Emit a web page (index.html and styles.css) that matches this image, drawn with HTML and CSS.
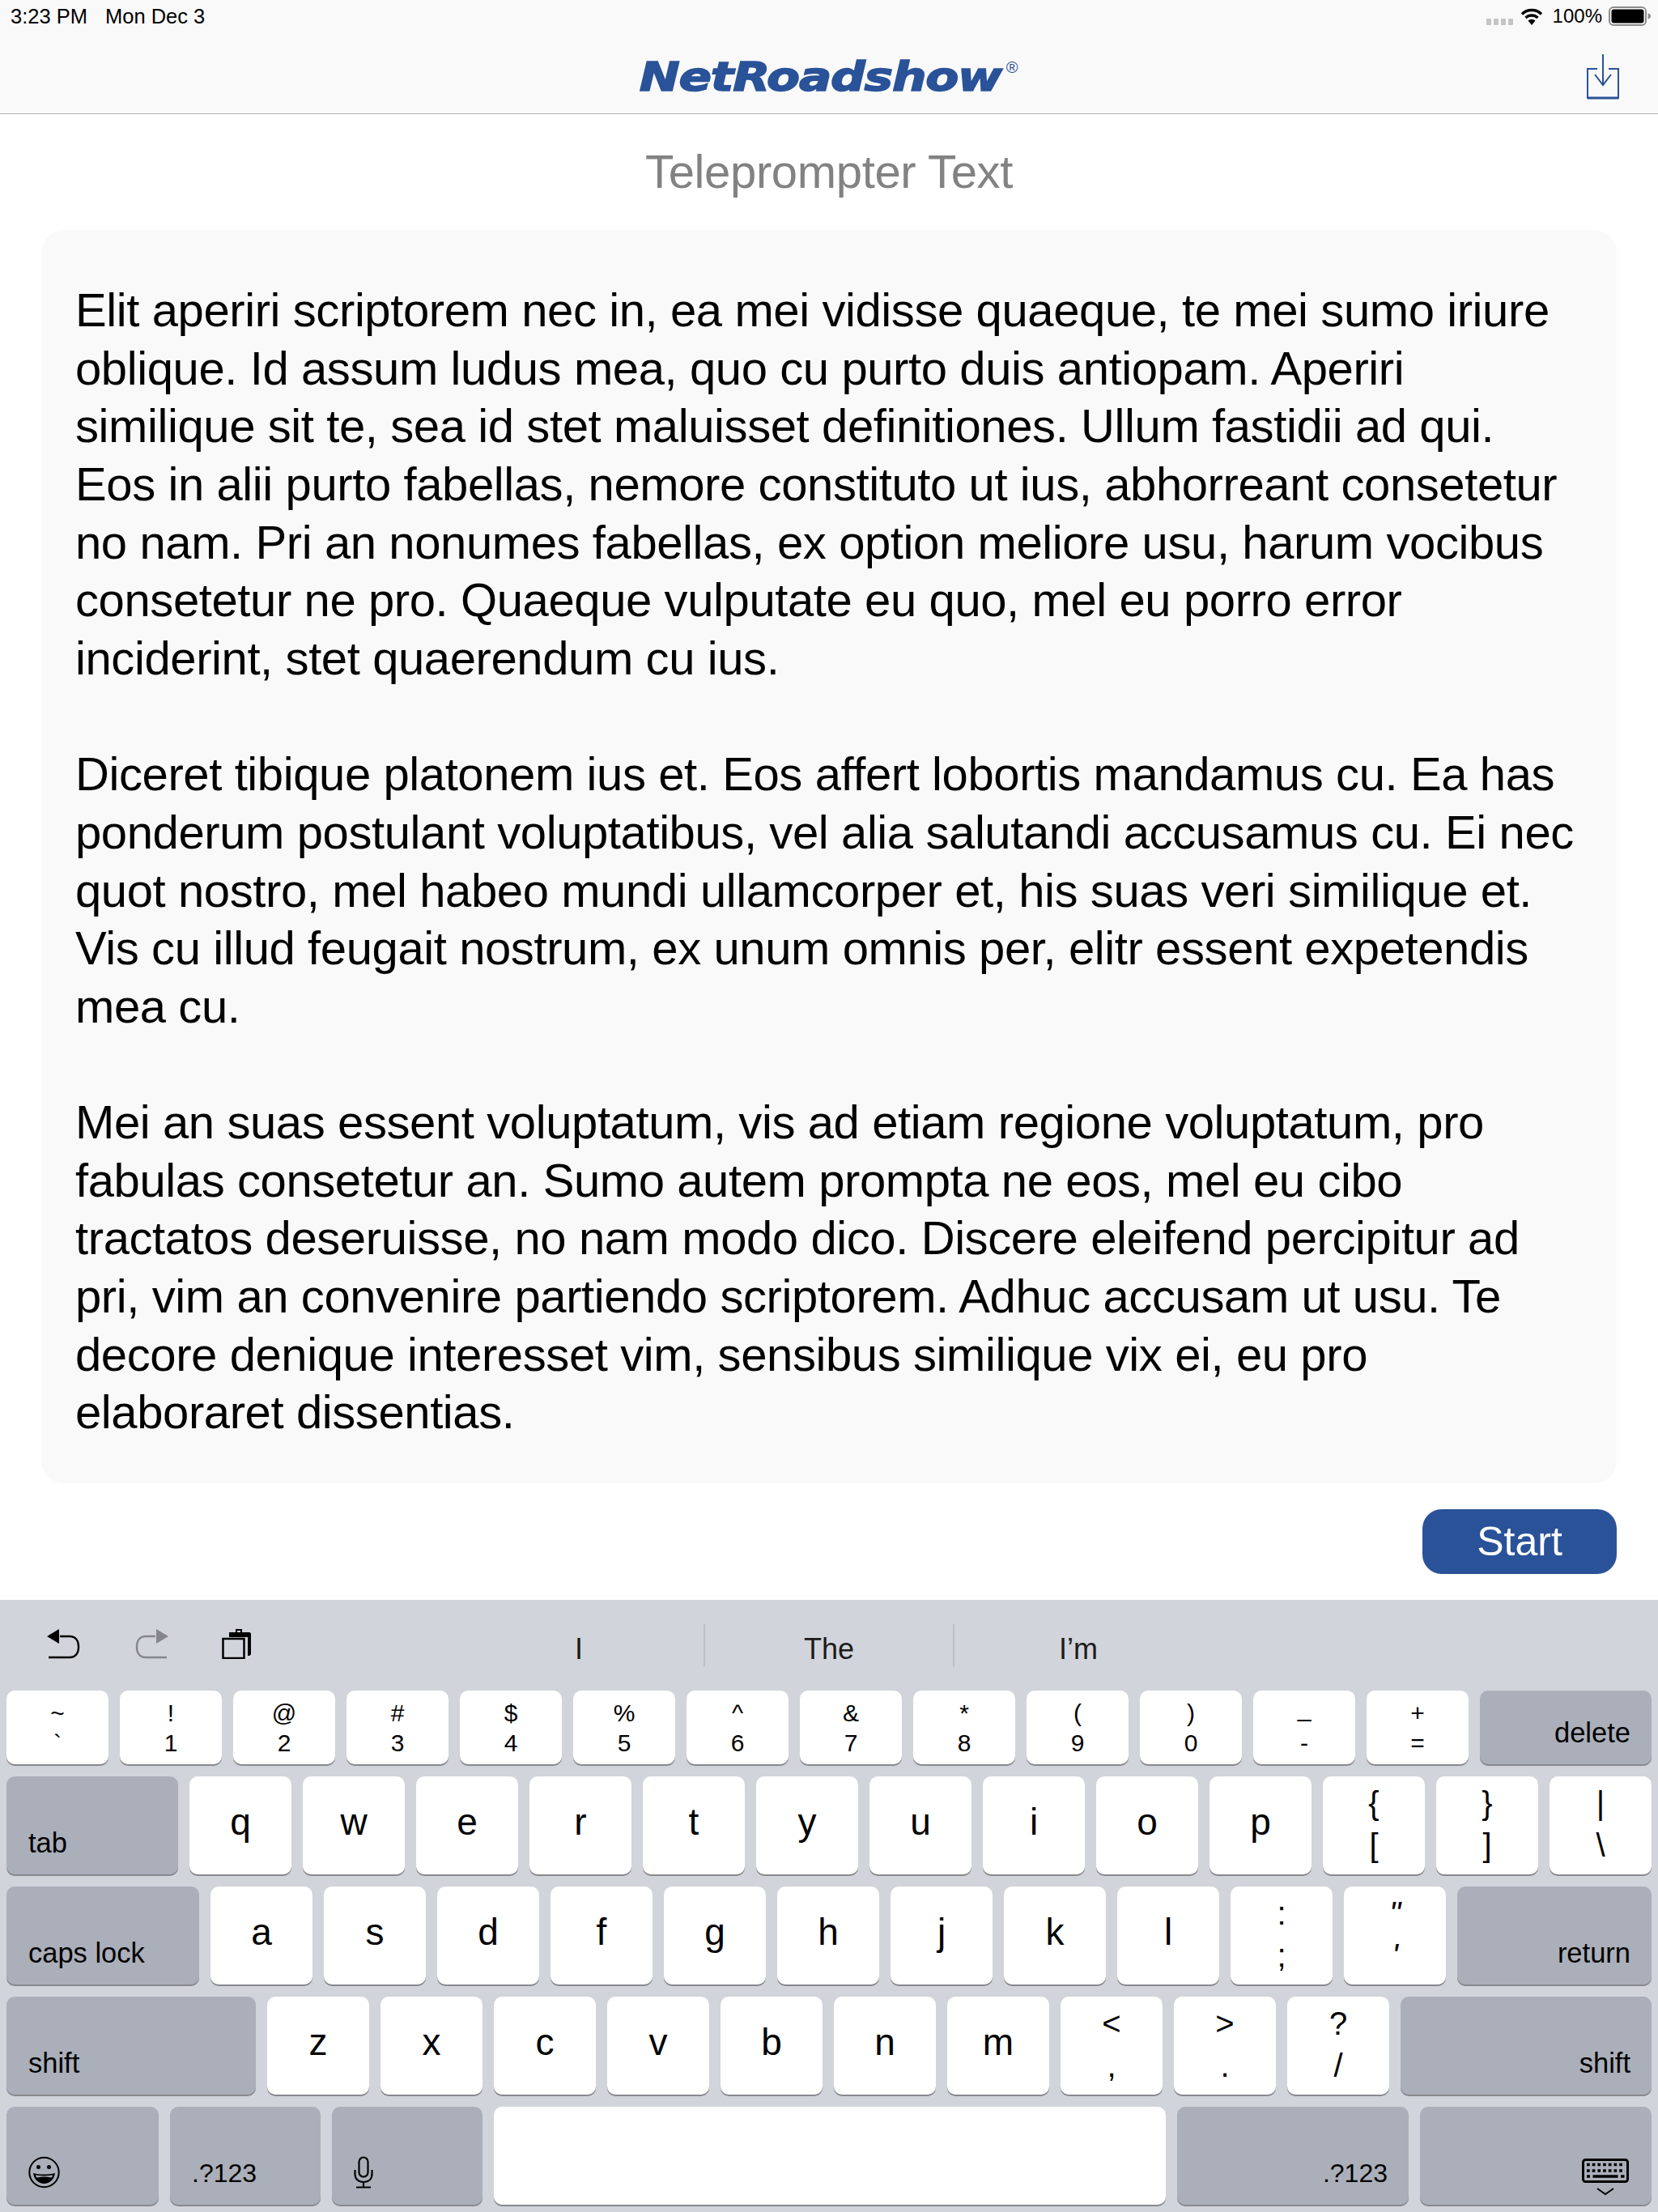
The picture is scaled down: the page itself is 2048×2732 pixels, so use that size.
FILE: index.html
```html
<!DOCTYPE html>
<html>
    <head>
        <title>Teleprompter Text</title>
        <link rel="stylesheet" href="styles.css">
    </head>
    <body>
        <header class="top">
            <div class="status">
                <div class="status-left"><span>3:23 PM</span><span>Mon Dec 3</span></div>
                <div class="status-right">
                    <svg class="signal" width="34" height="8" viewBox="0 0 34 8"><rect x="0" y="0" width="6" height="8" rx="1"/><rect x="9" y="0" width="6" height="8" rx="1"/><rect x="18" y="0" width="6" height="8" rx="1"/><rect x="27" y="0" width="6" height="8" rx="1"/></svg>
                    <svg class="wifi" width="28" height="21" viewBox="0 0 28 21"><path d="M2 7.500a17 17 0 0 1 24 0" fill="none" stroke="#000" stroke-width="3.400"/><path d="M6.500 12a11 11 0 0 1 15 0" fill="none" stroke="#000" stroke-width="3.400"/><path d="M9.500 15.500a6.500 6.500 0 0 1 9 0L14 21z"/></svg>
                    <span class="percent">100%</span>
                    <svg class="battery" width="53" height="24" viewBox="0 0 53 24"><rect x="1" y="1" width="45" height="22" rx="5" fill="none" stroke="#8c8c8c" stroke-width="2"/><rect x="3.500" y="3.500" width="40" height="17" rx="3"/><path d="M48.500 8.500c2.500 .5 3.500 1.800 3.500 3.500s-1 3-3.500 3.500z" fill="#8c8c8c"/></svg>
                </div>
            </div>
            <nav class="nav">
                <div class="logo">NetRoadshow<sup class="reg">®</sup></div>
                <svg class="download" width="40" height="56" viewBox="0 0 40 56" fill="none" stroke="#2a5298" stroke-width="2">
                    <path d="M13 18H1v36h38V18H27"/>
                    <path d="M1 54h38" stroke-width="3"/>
                    <path d="M20 0v38"/>
                    <path d="M10 25l10 13 10-13"/>
                </svg>
            </nav>
        </header>

        <main class="main">
            <h1 class="title">Teleprompter Text</h1>
            <div class="card">
                <p>Elit aperiri scriptorem nec in, ea mei vidisse quaeque, te mei sumo iriure<br>oblique. Id assum ludus mea, quo cu purto duis antiopam. Aperiri<br>similique sit te, sea id stet maluisset definitiones. Ullum fastidii ad qui.<br>Eos in alii purto fabellas, nemore constituto ut ius, abhorreant consetetur<br>no nam. Pri an nonumes fabellas, ex option meliore usu, harum vocibus<br>consetetur ne pro. Quaeque vulputate eu quo, mel eu porro error<br>inciderint, stet quaerendum cu ius.</p>
                <p>Diceret tibique platonem ius et. Eos affert lobortis mandamus cu. Ea has<br>ponderum postulant voluptatibus, vel alia salutandi accusamus cu. Ei nec<br>quot nostro, mel habeo mundi ullamcorper et, his suas veri similique et.<br>Vis cu illud feugait nostrum, ex unum omnis per, elitr essent expetendis<br>mea cu.</p>
                <p>Mei an suas essent voluptatum, vis ad etiam regione voluptatum, pro<br>fabulas consetetur an. Sumo autem prompta ne eos, mel eu cibo<br>tractatos deseruisse, no nam modo dico. Discere eleifend percipitur ad<br>pri, vim an convenire partiendo scriptorem. Adhuc accusam ut usu. Te<br>decore denique interesset vim, sensibus similique vix ei, eu pro<br>elaboraret dissentias.</p>
            </div>
            <div class="actions"><button class="start">Start</button></div>
        </main>

        <section class="keyboard">
            <div class="toolbar">
                <div class="tools">
                    <svg class="tool" width="42" height="38" viewBox="0 0 42 38" fill="none" stroke="#000" stroke-width="2.500"><path d="M16 10h12c7 0 11 5 11 13s-4 13-11 13H2"/><path d="M0 10L15 1v18z" fill="#000" stroke="none"/></svg>
                    <svg class="tool" width="42" height="38" viewBox="0 0 42 38" fill="none" stroke="#85878c" stroke-width="2.500"><path d="M26 10H14C7 10 3 15 3 23s4 13 11 13h26"/><path d="M42 10L27 1v18z" fill="#85878c" stroke="none"/></svg>
                    <svg class="tool" width="37" height="38" viewBox="0 0 37 38" fill="none" stroke="#000" stroke-width="2.500"><rect x="1.500" y="13" width="26" height="24"/><path d="M9 11V5h8V1h8v4h9c1 0 2 1 2 2v24c0 2-1 3-3 3h-1V11z" fill="#000" stroke="none"/><rect x="19" y="3" width="4" height="2" fill="#d0d3da" stroke="none"/></svg>
                </div>
                <div class="suggestions">
                    <span class="suggestion">I</span>
                    <span class="suggestion divided">The</span>
                    <span class="suggestion divided">I’m</span>
                </div>
            </div>

            <div class="row row-num">
                <div class="key dual"><span>~</span><span>`</span></div>
                <div class="key dual"><span>!</span><span>1</span></div>
                <div class="key dual"><span>@</span><span>2</span></div>
                <div class="key dual"><span>#</span><span>3</span></div>
                <div class="key dual"><span>$</span><span>4</span></div>
                <div class="key dual"><span>%</span><span>5</span></div>
                <div class="key dual"><span>^</span><span>6</span></div>
                <div class="key dual"><span>&amp;</span><span>7</span></div>
                <div class="key dual"><span>*</span><span>8</span></div>
                <div class="key dual"><span>(</span><span>9</span></div>
                <div class="key dual"><span>)</span><span>0</span></div>
                <div class="key dual"><span class="raised">_</span><span>-</span></div>
                <div class="key dual"><span>+</span><span>=</span></div>
                <div class="key fn right grow">delete</div>
            </div>
            <div class="row">
                <div class="key fn w-tab">tab</div>
                <div class="key">q</div><div class="key">w</div><div class="key">e</div><div class="key">r</div><div class="key">t</div>
                <div class="key">y</div><div class="key">u</div><div class="key">i</div><div class="key">o</div><div class="key">p</div>
                <div class="key dual big"><span>{</span><span>[</span></div>
                <div class="key dual big"><span>}</span><span>]</span></div>
                <div class="key dual big"><span>|</span><span>\</span></div>
            </div>
            <div class="row">
                <div class="key fn w-caps">caps lock</div>
                <div class="key">a</div><div class="key">s</div><div class="key">d</div><div class="key">f</div><div class="key">g</div>
                <div class="key">h</div><div class="key">j</div><div class="key">k</div><div class="key">l</div>
                <div class="key dual big"><span>:</span><span>;</span></div>
                <div class="key dual big"><span class="slant">"</span><span class="slant">'</span></div>
                <div class="key fn right grow">return</div>
            </div>
            <div class="row">
                <div class="key fn w-shift">shift</div>
                <div class="key">z</div><div class="key">x</div><div class="key">c</div><div class="key">v</div><div class="key">b</div>
                <div class="key">n</div><div class="key">m</div>
                <div class="key dual big"><span>&lt;</span><span>,</span></div>
                <div class="key dual big"><span>&gt;</span><span>.</span></div>
                <div class="key dual big"><span>?</span><span>/</span></div>
                <div class="key fn right grow">shift</div>
            </div>
            <div class="row">
                <div class="key fn w-emoji">
                    <svg width="40" height="40" viewBox="0 0 40 40"><circle cx="19.500" cy="20" r="18.200" fill="none" stroke="#000" stroke-width="2"/><circle cx="12.500" cy="13.500" r="2.500"/><circle cx="25.500" cy="13.500" r="2.500"/><path d="M6 21c8 2 18 2 27 0-1 8-7 13-13.500 13S7 29 6 21z"/><path d="M9 23.300c6 1.500 15 1.500 21 0l-1 3.200c-6-1.500-13-1.500-19 0z" fill="#abafb9"/></svg>
                </div>
                <div class="key fn w-mode small">.?123</div>
                <div class="key fn w-mode">
                    <svg width="24" height="40" viewBox="0 0 24 40" fill="none" stroke="#000" stroke-width="2.200"><rect x="6.500" y="1.500" width="11" height="24" rx="5.500"/><path d="M1.500 17v5c0 6 4 10 10.500 10s10.500-4 10.500-10v-5"/><path d="M12 32v6M3 38.500h18"/></svg>
                </div>
                <div class="key w-space"></div>
                <div class="key fn right w-wide small">.?123</div>
                <div class="key fn right grow">
                    <svg class="kb-icon" width="58" height="46" viewBox="0 0 58 46" fill="none" stroke="#000">
                        <rect x="1.500" y="1.500" width="55" height="27" rx="3" stroke-width="3"/>
                        <path d="M6 7.500h47M6 15h47" stroke-width="3.500" stroke-dasharray="3.700 3"/>
                        <path d="M6 22h4M13.500 22h31M48 22h4.500" stroke-width="3.500"/>
                        <path d="M19 37l10 7 10-7" stroke-width="2"/>
                    </svg>
                </div>
            </div>
        </section>
    </body>
</html>
```

FILE: styles.css
```css
* {
    box-sizing: border-box;
}
html, body {
    margin: 0;
    padding: 0;
}
body {
    width: 2048px;
    height: 2732px;
    overflow: hidden;
    background-color: #fff;
    color: #000;
    font-family: "Liberation Sans", Arial, sans-serif;
}

/* status bar + nav */
.top {
    height: 141px;
    background-color: #f9f9f9;
    border-bottom: 1px solid #b2b2b2;
}
.status {
    height: 40px;
    padding: 0 8px 0 13px;
    display: flex;
    justify-content: space-between;
    align-items: center;
    font-size: 24px;
}
.status-left {
    display: flex;
    gap: 22px;
    font-size: 25.500px;
}
.status-right {
    display: flex;
    align-items: center;
}
.signal {
    fill: #c4c4c4;
    margin: 14px 8px 0 0;
}
.percent {
    margin: 0 8px 0 12px;
}
.nav {
    height: 100px;
    display: grid;
    grid-template-columns: 1fr auto 1fr;
    align-items: center;
}
.logo {
    grid-column: 2;
    margin-top: 6px;
    color: #2a5298;
    font-family: "DejaVu Sans", sans-serif;
    font-weight: 700;
    font-style: italic;
    font-size: 49px;
    letter-spacing: -1px;
    line-height: 100px;
    white-space: nowrap;
    -webkit-text-stroke: 1.500px #2a5298;
    transform: scaleX(1.22);
}
.reg {
    display: inline-block;
    font-family: "Liberation Sans", sans-serif;
    font-size: 20px;
    font-weight: 400;
    font-style: normal;
    letter-spacing: 0;
    -webkit-text-stroke: 0;
    vertical-align: 22px;
    line-height: 0;
    margin-left: 3px;
    transform: scaleX(.82);
}
.download {
    grid-column: 3;
    justify-self: end;
    margin: 4px 48px 0 0;
}

/* main content */
.main {
    padding: 0 51px;
}
.title {
    margin: 0;
    height: 143px;
    padding-top: 36px;
    text-align: center;
    color: #828282;
    font-size: 58px;
    font-weight: 400;
    letter-spacing: -.35px;
    line-height: 70px;
}
.card {
    height: 1548px;
    padding: 63px 42px 0;
    background-color: #f9f9f9;
    border-radius: 28px;
    font-size: 58px;
    letter-spacing: -.4px;
    line-height: 71.650px;
    white-space: nowrap;
}
.card p {
    margin: 0 0 71.650px;
}
.actions {
    display: flex;
    justify-content: flex-end;
    padding-top: 32px;
}
.start {
    width: 240px;
    height: 80px;
    padding: 0;
    border: 0;
    border-radius: 24px;
    background-color: #2a5298;
    color: #fff;
    font-family: inherit;
    font-size: 50px;
}

/* keyboard */
.keyboard {
    position: absolute;
    left: 0;
    right: 0;
    top: 1976px;
    height: 756px;
    background-color: #d1d4da;
}
.toolbar {
    height: 112px;
    display: flex;
    align-items: center;
}
.tools {
    display: flex;
    gap: 66px;
    padding: 0 0 5px 58px;
}
.suggestions {
    margin-left: 250px;
    display: flex;
    height: 52px;
}
.suggestion {
    width: 308px;
    text-align: center;
    font-size: 36px;
    line-height: 62px;
    color: #1c1c1c;
}
.divided {
    border-left: 2px solid #bcbfc7;
}
.row {
    height: 121px;
    margin-bottom: 15px;
    padding: 0 8px;
    display: flex;
    gap: 14px;
}
.row-num {
    height: 91px;
}
.key {
    width: 126px;
    flex: none;
    background-color: #fff;
    border-radius: 10px;
    box-shadow: 0 2px 0 #88898f;
    display: flex;
    align-items: center;
    justify-content: center;
    font-size: 46px;
    padding-bottom: 10px;
}
.dual {
    flex-direction: column;
    justify-content: center;
    padding-bottom: 0;
    font-size: 30px;
    line-height: 37px;
}
.dual.big {
    font-size: 40px;
    line-height: 52px;
    padding-bottom: 3px;
}
.raised {
    margin-top: -6px;
    margin-bottom: 6px;
}
.slant {
    font-style: italic;
}
.fn {
    background-color: #abafb9;
    font-size: 34.500px;
    align-items: flex-end;
    justify-content: flex-start;
    padding: 0 26px 20px 27px;
    line-height: 38px;
}
.small {
    font-size: 32px;
}
.right {
    justify-content: flex-end;
}
.grow {
    flex: 1;
}
.kb-icon {
    margin: 0 2px -9px 0;
}
.w-tab { width: 212px; }
.w-caps { width: 238px; }
.w-shift { width: 308px; }
.w-emoji { width: 188px; }
.w-mode { width: 186px; }
.w-space { width: 830px; }
.w-wide { width: 286px; }
```
